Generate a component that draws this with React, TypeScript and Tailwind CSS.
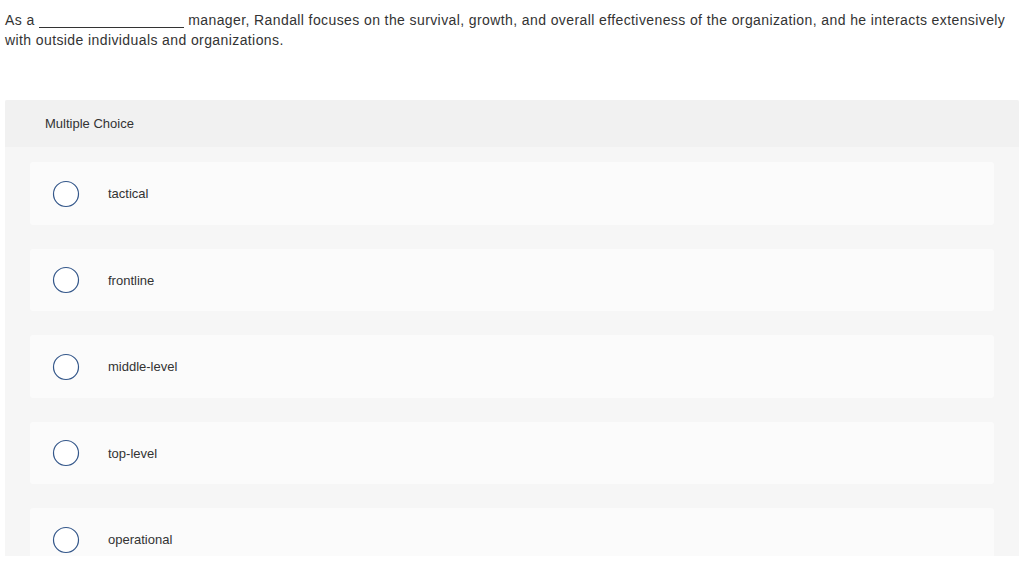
import React from 'react';

const options = ['tactical', 'frontline', 'middle-level', 'top-level', 'operational'];

function Radio() {
    return (
        <svg width="28" height="28" viewBox="0 0 28 28" className="shrink-0">
            <circle cx="14" cy="14" r="12.5" fill="#ffffff" stroke="#34578a" strokeWidth="1.2" />
        </svg>
    );
}

export default function App() {
    return (
        <div className="min-h-[575px] bg-white text-[#333333]" style={{ fontFamily: '"Liberation Sans", Arial, sans-serif' }}>
            <p className="px-[5px] pt-[10px] text-[14px] leading-[20px] tracking-[0.4px]">
                As a <span className="inline-block w-[145px] border-b border-[#333333] align-[-3px]"></span> manager, Randall focuses on the survival, growth, and overall effectiveness of the organization, and he interacts extensively with outside individuals and organizations.
            </p>

            <div className="mx-[5px] mt-[50px] h-[456px] overflow-hidden rounded-t-[2px] bg-[#f6f6f6]">
                <div className="flex h-[47px] items-center bg-[#f1f1f1] pb-[1px] pl-[40px] pt-[1px] text-[13px]">
                    Multiple Choice
                </div>
                <div className="flex flex-col gap-[24px] px-[25px] pt-[15px]">
                    {options.map((o) => (
                        <div key={o} className="flex h-[62.5px] shrink-0 items-center rounded-[3px] bg-[#fbfbfb] pl-[22px] pt-[1px]">
                            <Radio />
                            <span className="ml-[28px] text-[13px]">{o}</span>
                        </div>
                    ))}
                </div>
            </div>
        </div>
    );
}
